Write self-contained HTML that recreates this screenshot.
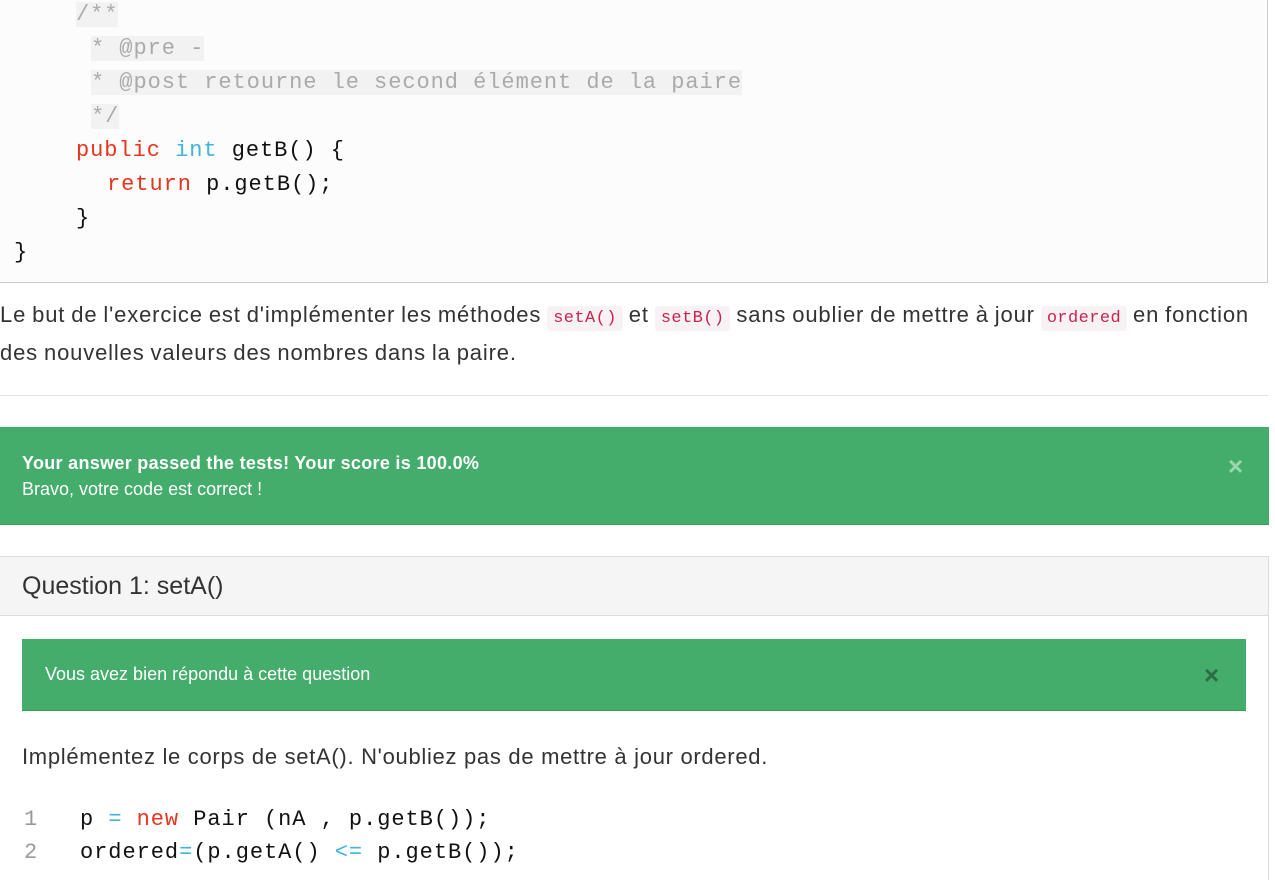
<!DOCTYPE html>
<html><head><meta charset="utf-8"><style>
html,body{margin:0;width:1275px;height:880px;overflow:hidden;}
body{background:#fff;font-family:"Liberation Sans",sans-serif;color:#333;position:relative;}
.code{position:absolute;left:0;top:-2px;width:1267px;height:284px;background:#fcfcfc;border-right:1px solid #ccc;border-bottom:1px solid #ccc;}
.ln{position:absolute;font-family:"Liberation Mono",monospace;font-size:22px;letter-spacing:0.95px;white-space:pre;line-height:34px;color:#111;}
.cm{color:#aaa;background:#f2f2f2;}
.kw{color:#e8341c}.ty{color:#3eb5dc}
p.t{position:absolute;left:0;top:298px;margin:0;font-size:22px;letter-spacing:0.85px;word-spacing:-1px;line-height:34px;color:#333;width:1275px;}
code{font-family:"Liberation Mono",monospace;font-size:17px;letter-spacing:0.4px;color:#c7254e;background:#f9f2f4;padding:3px 6px;border-radius:3px;}
.hr{position:absolute;left:0;top:395px;width:1268px;height:1px;background:#e2e2e2;}
.a1{position:absolute;left:0;top:427px;width:1269px;height:97px;background:#44ad6b;border-bottom:1px solid #3c9a5e;color:#fff;}
.x{position:absolute;font-size:26px;font-weight:bold;color:#9cd6b0;}
.panel{position:absolute;left:0;top:556px;width:1268px;height:330px;border:1px solid #ddd;border-left:none;border-bottom:none;}
.ph{height:58px;background:#f5f5f5;border-bottom:1px solid #ddd;font-size:25px;color:#333;line-height:58px;padding-left:22px;}
.a2{position:absolute;left:22px;top:639px;width:1224px;height:71px;background:#44ad6b;border-bottom:1px solid #3c9a5e;color:#fff;}
</style></head><body>
<div class="code">
<div class="ln" style="left:76px;top:0px"><span class="cm">/**</span></div>
<div class="ln" style="left:91px;top:34px"><span class="cm">* @pre -</span></div>
<div class="ln" style="left:91px;top:68px"><span class="cm">* @post retourne le second élément de la paire</span></div>
<div class="ln" style="left:91px;top:102px"><span class="cm">*/</span></div>
<div class="ln" style="left:76px;top:136px"><span class="kw">public</span> <span class="ty">int</span> getB() {</div>
<div class="ln" style="left:107px;top:170px"><span class="kw">return</span> p.getB();</div>
<div class="ln" style="left:76px;top:204px">}</div>
<div class="ln" style="left:14px;top:238px">}</div>
</div>
<p class="t">Le but de l'exercice est d'implémenter les méthodes <code>setA()</code> et <code>setB()</code> sans oublier de mettre à jour <code>ordered</code> en fonction<br>des nouvelles valeurs des nombres dans la paire.</p>
<div class="hr"></div>
<div class="a1">
<div style="position:absolute;left:22px;top:26px;font-size:18px;letter-spacing:0.3px;font-weight:bold;">Your answer passed the tests! Your score is 100.0%</div>
<div style="position:absolute;left:22px;top:52px;font-size:18px;">Bravo, votre code est correct !</div>
<div class="x" style="left:1228px;top:24px;">×</div>
</div>
<div class="panel"><div class="ph">Question 1: setA()</div></div>
<div class="a2">
<div style="position:absolute;left:23px;top:25px;font-size:18px;">Vous avez bien répondu à cette question</div>
<div class="x" style="left:1182px;top:21px;color:#2f6b45;">×</div>
</div>
<div style="position:absolute;left:22px;top:744px;font-size:22px;letter-spacing:0.7px;color:#333;">Implémentez le corps de setA(). N'oubliez pas de mettre à jour ordered.</div>
<div class="ln" style="left:24px;top:803px;color:#999">1</div>
<div class="ln" style="left:24px;top:836px;color:#999">2</div>
<div class="ln" style="left:80px;top:803px">p <span class="ty">=</span> <span class="kw">new</span> Pair (nA , p.getB());</div>
<div class="ln" style="left:80px;top:836px">ordered<span class="ty">=</span>(p.getA() <span class="ty">&lt;=</span> p.getB());</div>
</body></html>
